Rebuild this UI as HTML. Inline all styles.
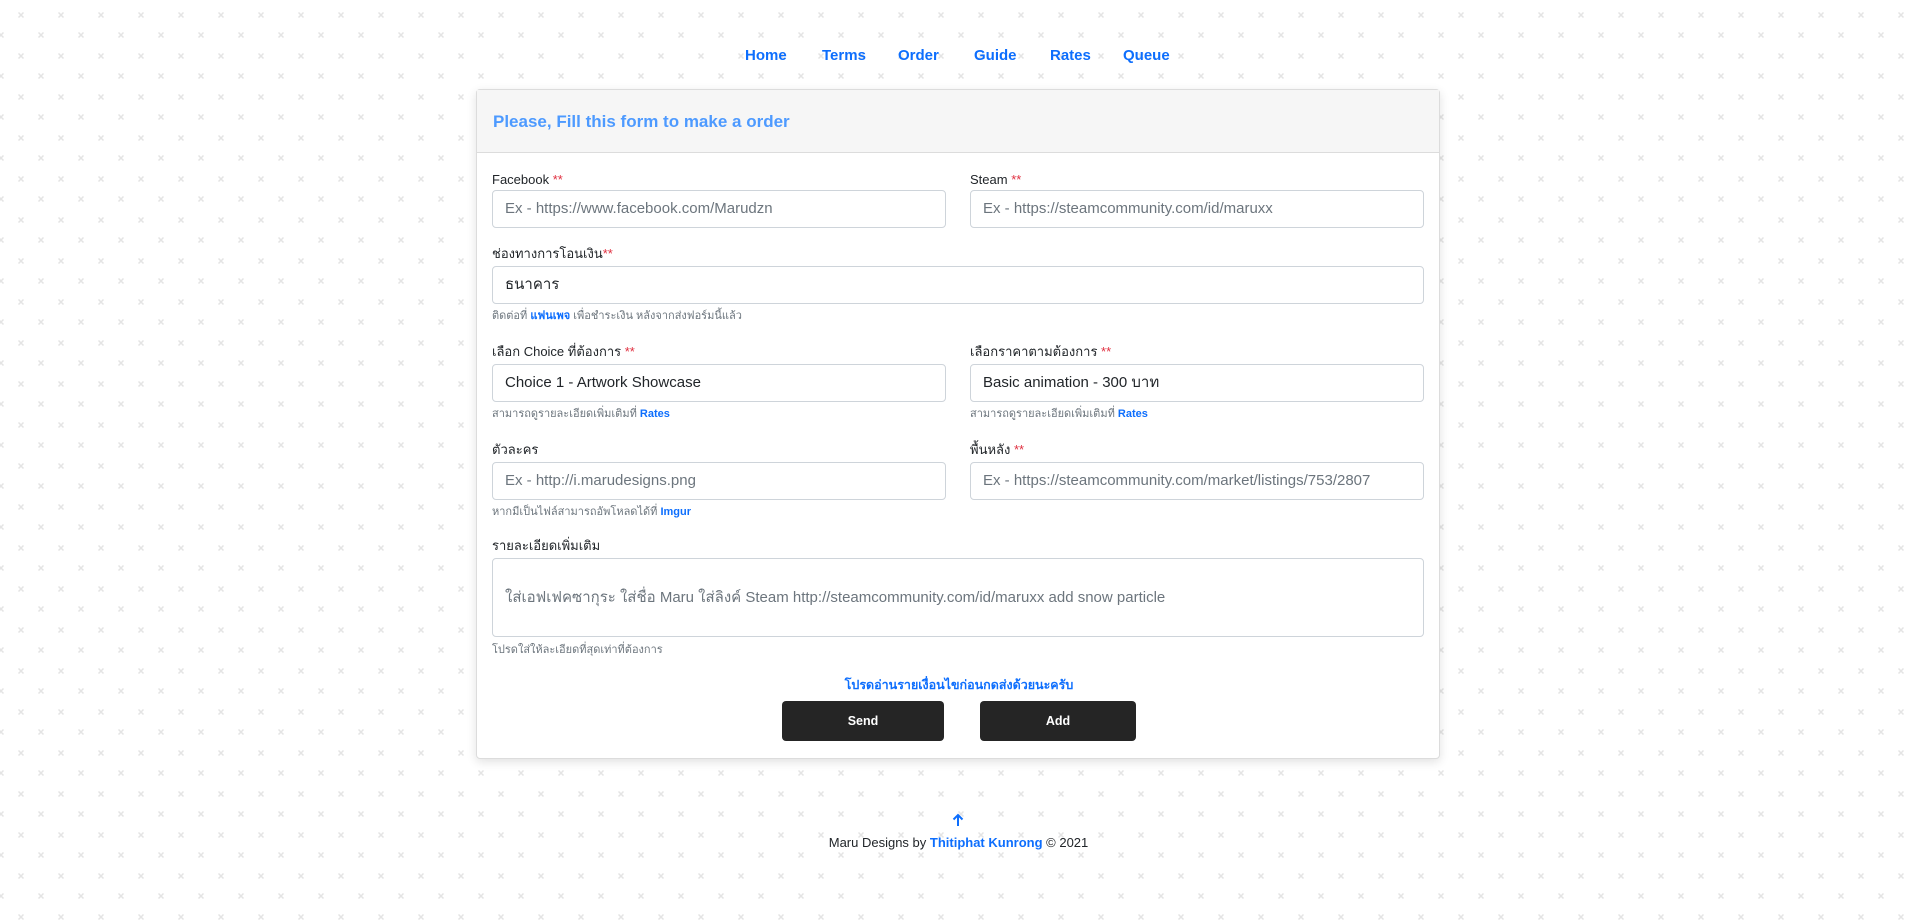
<!DOCTYPE html>
<html><head><meta charset="utf-8"><style>
*{box-sizing:border-box;margin:0;padding:0}
html,body{width:1917px;height:924px;overflow:hidden}
body{font-family:"Liberation Sans","Noto Sans CJK SC",sans-serif;color:#212529;
background-color:#fff;
background-image:url("data:image/svg+xml;utf8,<svg xmlns='http://www.w3.org/2000/svg' width='40' height='41'><g stroke='%23e4e4e4' stroke-width='1.5'><path d='M5.5 2.5l5 5M10.5 2.5l-5 5M25.5 23.5l5 5M30.5 23.5l-5 5'/></g></svg>");
background-position:473px 30px;}
nav{position:absolute;top:47px;left:0;width:1917px;height:22px}
nav a{position:absolute;font-weight:bold;font-size:15px;color:#0d6efd;text-decoration:none}
.card{position:absolute;left:476px;top:89px;width:964px;height:670px;background:#fff;border:1px solid #dcdcdc;border-radius:4px;box-shadow:0 3px 10px rgba(0,0,0,.12)}
.hd{height:63px;background:#f6f6f6;border-bottom:1px solid #dcdcdc;padding:22px 16px;font-size:17px;font-weight:bold;color:#4d9aff}
.el{position:absolute}
label{font-size:13px;color:#212529}
label b{color:#e03040;font-weight:normal}
.in{position:absolute;height:38px;border:1px solid #ced4da;border-radius:4px;padding:0 12px;line-height:36px;font-size:15px;color:#6c757d;white-space:nowrap;overflow:hidden;background:#fff}
.in.v{color:#212529}
.help{font-size:11px;color:#6c757d}
.help a{color:#0d6efd;font-weight:bold;text-decoration:none}
.btn{position:absolute;height:40px;background:#252525;border-radius:4px;color:#fff;font-weight:bold;font-size:12.5px;text-align:center;line-height:40px}
</style></head><body>
<nav><a style="left:745px">Home</a><a style="left:822px">Terms</a><a style="left:898px">Order</a><a style="left:974px">Guide</a><a style="left:1050px">Rates</a><a style="left:1123px">Queue</a></nav>
<div class="card"><div class="hd">Please, Fill this form to make a order</div>
<div class="el" style="left:15px;top:81px"><label>Facebook <b>**</b></label></div>
<div class="in" style="left:15px;top:100px;width:454px">Ex - https://www.facebook.com/Marudzn</div>
<div class="el" style="left:493px;top:81px"><label>Steam <b>**</b></label></div>
<div class="in" style="left:493px;top:100px;width:454px">Ex - https://steamcommunity.com/id/maruxx</div>
<div class="el" style="left:15px;top:153px"><label>ช่องทางการโอนเงิน<b>**</b></label></div>
<div class="in v" style="left:15px;top:176px;width:932px">ธนาคาร</div>
<div class="el help" style="left:15px;top:216px">ติดต่อที่ <a>แฟนเพจ</a> เพื่อชำระเงิน หลังจากส่งฟอร์มนี้แล้ว</div>
<div class="el" style="left:15px;top:251px"><label>เลือก Choice ที่ต้องการ <b>**</b></label></div>
<div class="in v" style="left:15px;top:274px;width:454px">Choice 1 - Artwork Showcase</div>
<div class="el help" style="left:15px;top:314px">สามารถดูรายละเอียดเพิ่มเติมที่ <a>Rates</a></div>
<div class="el" style="left:493px;top:251px"><label>เลือกราคาตามต้องการ <b>**</b></label></div>
<div class="in v" style="left:493px;top:274px;width:454px">Basic animation - 300 บาท</div>
<div class="el help" style="left:493px;top:314px">สามารถดูรายละเอียดเพิ่มเติมที่ <a>Rates</a></div>
<div class="el" style="left:15px;top:349px"><label>ตัวละคร</label></div>
<div class="in" style="left:15px;top:372px;width:454px">Ex - http://i.marudesigns.png</div>
<div class="el help" style="left:15px;top:412px">หากมีเป็นไฟล์สามารถอัพโหลดได้ที่ <a>Imgur</a></div>
<div class="el" style="left:493px;top:349px"><label>พื้นหลัง <b>**</b></label></div>
<div class="in" style="left:493px;top:372px;width:454px">Ex - https://steamcommunity.com/market/listings/753/2807</div>
<div class="el" style="left:15px;top:445px"><label>รายละเอียดเพิ่มเติม</label></div>
<div class="in" style="left:15px;top:468px;width:932px;height:79px;line-height:77px">ใส่เอฟเฟคซากุระ ใส่ชื่อ Maru ใส่ลิงค์ Steam http://steamcommunity.com/id/maruxx add snow particle</div>
<div class="el help" style="left:15px;top:550px">โปรดใส่ให้ละเอียดที่สุดเท่าที่ต้องการ</div>
<div class="el" style="left:0;width:964px;top:585px;text-align:center;font-size:12.5px;font-weight:bold;color:#0d6efd">โปรดอ่านรายเงื่อนไขก่อนกดส่งด้วยนะครับ</div>
<div class="btn" style="left:305px;top:611px;width:162px">Send</div>
<div class="btn" style="left:503px;top:611px;width:156px">Add</div>
</div>
<svg class="el" style="left:951px;top:813px" width="14" height="14" viewBox="0 0 14 14"><path d="M7 13V2M2.5 6.5L7 2l4.5 4.5" fill="none" stroke="#0d6efd" stroke-width="2"/></svg>
<div class="el" style="left:0;width:1917px;top:835px;text-align:center;font-size:13px">Maru Designs by <b style="color:#0d6efd">Thitiphat Kunrong</b> © 2021</div>
</body></html>
